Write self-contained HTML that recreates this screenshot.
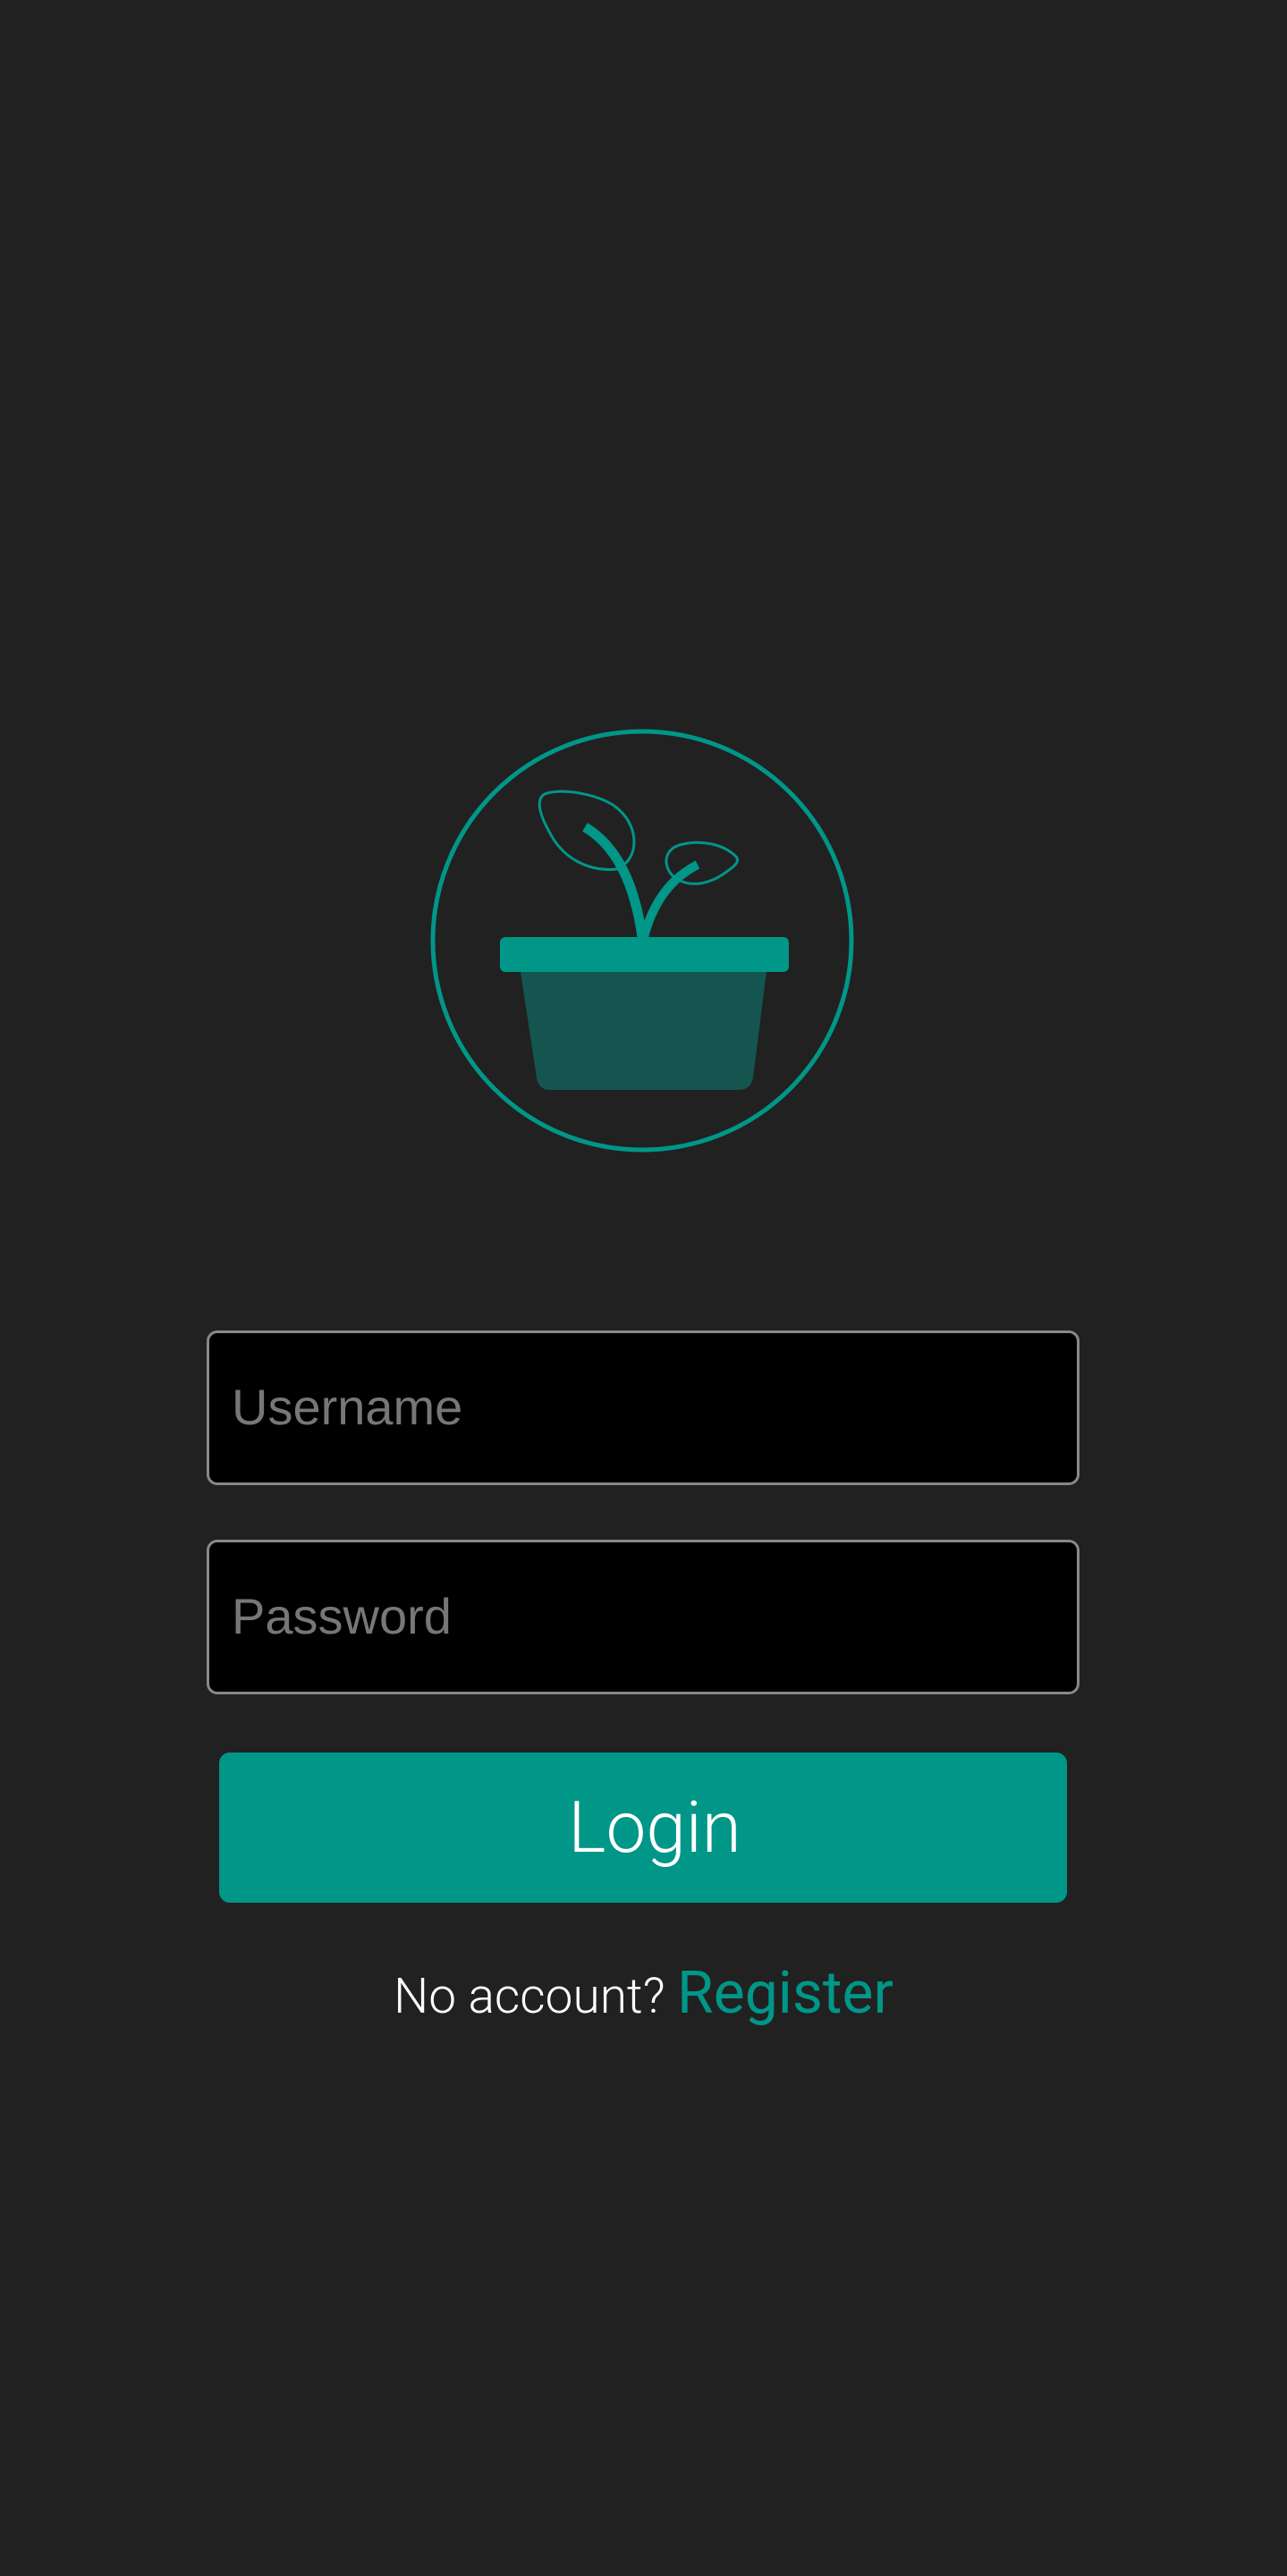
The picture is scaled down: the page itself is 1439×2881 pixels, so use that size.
<!DOCTYPE html>
<html><head><meta charset="utf-8"><style>
html,body{margin:0;padding:0;background:#212121;width:1439px;height:2881px;overflow:hidden;font-family:"Roboto","Liberation Sans",sans-serif;}
.inp{position:absolute;left:231px;width:976px;height:173px;background:#000;border:3px solid #888;border-radius:12px;box-sizing:border-box;}
.ph{position:absolute;left:25px;top:48px;font-size:56px;color:#777;line-height:70px;font-family:"Liberation Sans",sans-serif;}
.btn{position:absolute;left:245px;top:1960px;width:948px;height:168px;background:#009688;border-radius:12px;color:#fff;text-align:center;font-size:80px;line-height:168px;font-weight:300;}
.btn span{position:relative;left:13px;}
.reg{position:absolute;left:0;width:1439px;top:2180px;text-align:center;color:#fff;font-size:55px;line-height:100px;font-weight:300;}
.reg span{color:#009688;font-size:66px;font-weight:400;}
</style></head><body>
<svg width="1439" height="1400" style="position:absolute;left:0;top:0">
<circle cx="718" cy="1052" r="234" fill="none" stroke="#009688" stroke-width="5"/>
<path d="M582,1087 L857,1087 L842,1205 Q840,1219 825,1219 L615,1219 Q602,1219 600,1205 Z" fill="#145550"/>
<rect x="559" y="1048" width="323" height="39" rx="6" fill="#009688"/>
<path d="M654,925 Q705,955 718,1048" fill="none" stroke="#009688" stroke-width="11"/>
<path d="M780,967 Q735,990 720,1048" fill="none" stroke="#009688" stroke-width="10"/>
<path d="M690,972 C660,975 630,962 614,930 C600,905 600,890 612,887 C632,882 665,888 685,900 C712,918 715,950 700,965 Z" fill="none" stroke="#009688" stroke-width="3"/>
<path d="M755,982 C740,970 742,950 760,945 C785,938 810,945 823,958 C828,964 820,970 808,978 C790,990 770,992 755,982 Z" fill="none" stroke="#009688" stroke-width="3"/>
</svg>
<div class="inp" style="top:1488px"><div class="ph">Username</div></div>
<div class="inp" style="top:1722px"><div class="ph">Password</div></div>
<div class="btn"><span>Login</span></div>
<div class="reg">No account? <span>Register</span></div>
</body></html>
